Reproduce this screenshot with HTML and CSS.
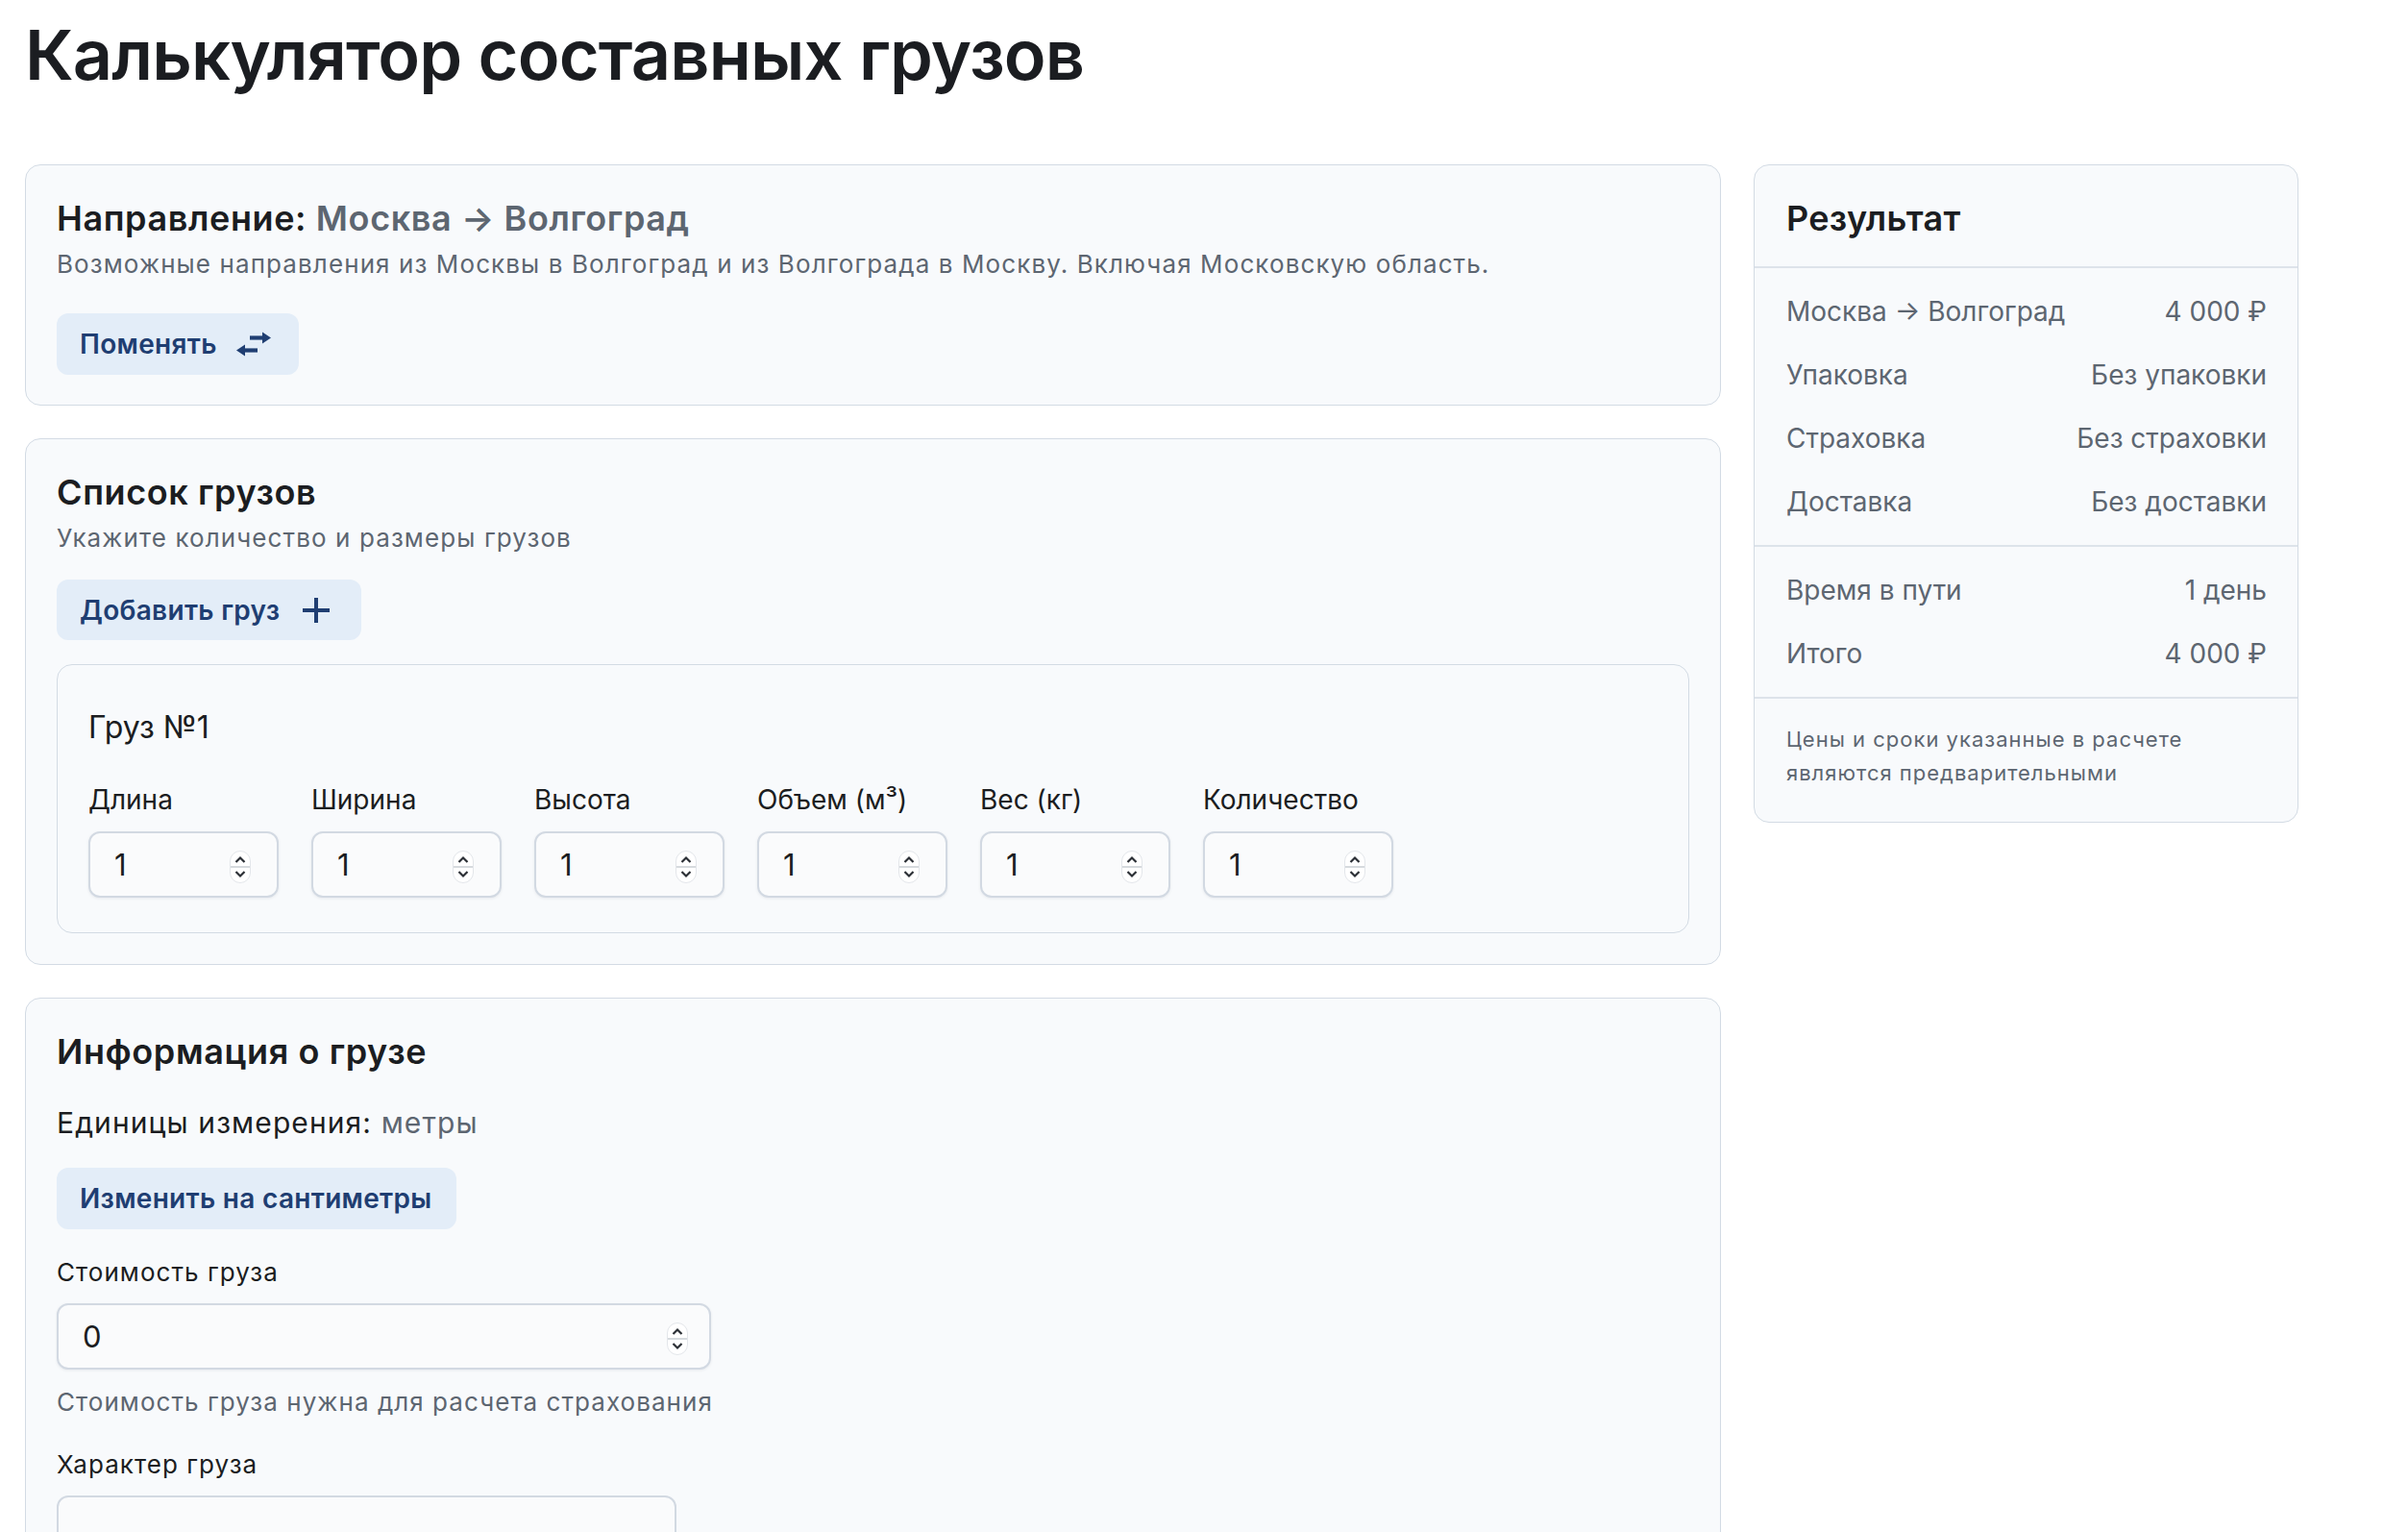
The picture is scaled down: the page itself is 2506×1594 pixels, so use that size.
FILE: index.html
```html
<!DOCTYPE html>
<html lang="ru">
<head>
    <meta charset="UTF-8">
    <meta name="viewport" content="width=device-width, initial-scale=1.0">
    <title>Калькулятор составных грузов</title>
    <link rel="stylesheet" href="styles.css">
</head>
<body>
    <div class="page">
        <h1 class="title">Калькулятор составных грузов</h1>
        <div class="layout">
            <main class="form-col">
                <!-- Направление -->
                <section class="card">
                    <h2 class="card-title">Направление: <span class="muted">Москва → Волгоград</span></h2>
                    <p class="card-text">Возможные направления из Москвы в Волгоград и из Волгограда в Москву. Включая Московскую область.</p>
                    <button class="btn btn-icon-after btn-swap" type="button">
                        Поменять
                        <svg class="btn-icon" width="36" height="26" viewBox="0 0 36 26">
                            <path d="M14 6.5h14" stroke="currentColor" stroke-width="4.2"/>
                            <path d="M27 0.5l9 6-9 6z" fill="currentColor"/>
                            <path d="M22 19.5h-14" stroke="currentColor" stroke-width="4.2"/>
                            <path d="M9 13.5l-9 6 9 6z" fill="currentColor"/>
                        </svg>
                    </button>
                </section>

                <!-- Список грузов -->
                <section class="card">
                    <h2 class="card-title">Список грузов</h2>
                    <p class="card-text">Укажите количество и размеры грузов</p>
                    <button class="btn btn-icon-after btn-add" type="button">
                        Добавить груз
                        <svg class="btn-icon" width="36" height="28" viewBox="0 0 36 28">
                            <path d="M18 1v26M4 14h28" stroke="currentColor" stroke-width="4"/>
                        </svg>
                    </button>

                    <div class="cargo">
                        <div class="cargo-title">Груз №1</div>
                        <div class="cargo-fields">
                            <label class="field">
                                <span class="field-label">Длина</span>
                                <span class="num"><input type="number" value="1"><svg class="spin" width="22" height="34" viewBox="0 0 22 34"><rect x="0.5" y="0.5" width="21" height="33" rx="10.5" fill="#fff" stroke="#e3e6ea"/><path d="M1 17h20" stroke="#d6dade" stroke-width="2"/><path d="M6.5 12l4.5-4.5 4.5 4.5M6.5 22l4.5 4.5 4.5-4.5" fill="none" stroke="#2b2f35" stroke-width="2.2"/></svg></span>
                            </label>
                            <label class="field">
                                <span class="field-label">Ширина</span>
                                <span class="num"><input type="number" value="1"><svg class="spin" width="22" height="34" viewBox="0 0 22 34"><rect x="0.5" y="0.5" width="21" height="33" rx="10.5" fill="#fff" stroke="#e3e6ea"/><path d="M1 17h20" stroke="#d6dade" stroke-width="2"/><path d="M6.5 12l4.5-4.5 4.5 4.5M6.5 22l4.5 4.5 4.5-4.5" fill="none" stroke="#2b2f35" stroke-width="2.2"/></svg></span>
                            </label>
                            <label class="field">
                                <span class="field-label">Высота</span>
                                <span class="num"><input type="number" value="1"><svg class="spin" width="22" height="34" viewBox="0 0 22 34"><rect x="0.5" y="0.5" width="21" height="33" rx="10.5" fill="#fff" stroke="#e3e6ea"/><path d="M1 17h20" stroke="#d6dade" stroke-width="2"/><path d="M6.5 12l4.5-4.5 4.5 4.5M6.5 22l4.5 4.5 4.5-4.5" fill="none" stroke="#2b2f35" stroke-width="2.2"/></svg></span>
                            </label>
                            <label class="field">
                                <span class="field-label">Объем (м³)</span>
                                <span class="num"><input type="number" value="1"><svg class="spin" width="22" height="34" viewBox="0 0 22 34"><rect x="0.5" y="0.5" width="21" height="33" rx="10.5" fill="#fff" stroke="#e3e6ea"/><path d="M1 17h20" stroke="#d6dade" stroke-width="2"/><path d="M6.5 12l4.5-4.5 4.5 4.5M6.5 22l4.5 4.5 4.5-4.5" fill="none" stroke="#2b2f35" stroke-width="2.2"/></svg></span>
                            </label>
                            <label class="field">
                                <span class="field-label">Вес (кг)</span>
                                <span class="num"><input type="number" value="1"><svg class="spin" width="22" height="34" viewBox="0 0 22 34"><rect x="0.5" y="0.5" width="21" height="33" rx="10.5" fill="#fff" stroke="#e3e6ea"/><path d="M1 17h20" stroke="#d6dade" stroke-width="2"/><path d="M6.5 12l4.5-4.5 4.5 4.5M6.5 22l4.5 4.5 4.5-4.5" fill="none" stroke="#2b2f35" stroke-width="2.2"/></svg></span>
                            </label>
                            <label class="field">
                                <span class="field-label">Количество</span>
                                <span class="num"><input type="number" value="1"><svg class="spin" width="22" height="34" viewBox="0 0 22 34"><rect x="0.5" y="0.5" width="21" height="33" rx="10.5" fill="#fff" stroke="#e3e6ea"/><path d="M1 17h20" stroke="#d6dade" stroke-width="2"/><path d="M6.5 12l4.5-4.5 4.5 4.5M6.5 22l4.5 4.5 4.5-4.5" fill="none" stroke="#2b2f35" stroke-width="2.2"/></svg></span>
                            </label>
                        </div>
                    </div>
                </section>

                <!-- Информация о грузе -->
                <section class="card card-info">
                    <h2 class="card-title">Информация о грузе</h2>
                    <div class="units">Единицы измерения: <span class="muted">метры</span></div>
                    <button class="btn btn-units" type="button">Изменить на сантиметры</button>

                    <label class="info-label">Стоимость груза</label>
                    <span class="num num-wide"><input type="number" value="0"><svg class="spin" width="22" height="34" viewBox="0 0 22 34"><rect x="0.5" y="0.5" width="21" height="33" rx="10.5" fill="#fff" stroke="#e3e6ea"/><path d="M1 17h20" stroke="#d6dade" stroke-width="2"/><path d="M6.5 12l4.5-4.5 4.5 4.5M6.5 22l4.5 4.5 4.5-4.5" fill="none" stroke="#2b2f35" stroke-width="2.2"/></svg></span>
                    <p class="hint">Стоимость груза нужна для расчета страхования</p>

                    <label class="info-label info-label-gap">Характер груза</label>
                    <div class="select-box"></div>
                </section>
            </main>

            <aside class="result">
                <div class="result-head">Результат</div>
                <div class="result-group">
                    <div class="result-row"><span>Москва → Волгоград</span><span>4 000 ₽</span></div>
                    <div class="result-row"><span>Упаковка</span><span>Без упаковки</span></div>
                    <div class="result-row"><span>Страховка</span><span>Без страховки</span></div>
                    <div class="result-row"><span>Доставка</span><span>Без доставки</span></div>
                </div>
                <div class="result-group">
                    <div class="result-row"><span>Время в пути</span><span>1 день</span></div>
                    <div class="result-row"><span>Итого</span><span>4 000 ₽</span></div>
                </div>
                <p class="result-note">Цены и сроки указанные в расчете являются предварительными</p>
            </aside>
        </div>
    </div>
</body>
</html>
```

FILE: styles.css
```css
/* Калькулятор */
body {
    margin: 0;
    font-family: Inter, "Noto Sans", sans-serif;
    color: #1b1d21;
    background: #fff;
}

.page {
    padding: 0 0 0 26px;
}

.title {
    margin: 0;
    padding-top: 14px;
    font-size: 72px;
    line-height: 86px;
    font-weight: 600;
    letter-spacing: -0.85px;
}

.layout {
    display: grid;
    grid-template-columns: 1765px 567px;
    gap: 34px;
    margin-top: 71px;
    align-items: start;
}

.form-col {
    display: flex;
    flex-direction: column;
    gap: 34px;
}

.card {
    background: #f8fafc;
    border: 1px solid #d3dbe4;
    border-radius: 16px;
    padding: 32px 32px 31px;
}

.card-title {
    margin: 0;
    font-size: 36px;
    line-height: 47px;
    font-weight: 600;
    letter-spacing: 0.6px;
}

.muted {
    color: #5d6671;
}

.card-text {
    margin: 4px 0 0;
    font-size: 26px;
    line-height: 39px;
    letter-spacing: 1.1px;
    color: #5d6671;
}

.btn {
    display: inline-flex;
    align-items: center;
    border: none;
    border-radius: 12px;
    background: #e3edf8;
    color: #1f3e72;
    font-family: inherit;
    font-size: 28px;
    font-weight: 600;
    letter-spacing: 0.3px;
    height: 64px;
    padding: 0 25px 0 24px;
    cursor: pointer;
}

.btn-icon-after {
    gap: 20px;
    padding-right: 29px;
}

.btn-swap {
    margin-top: 32px;
}

.btn-add {
    margin-top: 24px;
    height: 63px;
}

.btn-icon {
    display: block;
}

.cargo {
    margin-top: 25px;
    margin-bottom: 1px;
    border: 1px solid #d3dbe4;
    border-radius: 16px;
    padding: 41px 32px 36px;
}

.cargo-title {
    font-size: 32px;
    line-height: 48px;
}

.cargo-fields {
    display: flex;
    gap: 34px;
    margin-top: 30px;
}

.field {
    display: flex;
    flex-direction: column;
    gap: 12px;
    width: 198px;
}

.field-label {
    font-size: 28px;
    line-height: 42px;
}

.num {
    display: flex;
    align-items: center;
    height: 69px;
    box-sizing: border-box;
    border: 2px solid #d2d9e2;
    border-radius: 12px;
    background: #fafbfc;
    box-shadow: 0 1px 3px rgba(30, 40, 60, 0.08);
    padding: 0 27px 0 25px;
}

.num input {
    flex: 1;
    min-width: 0;
    border: none;
    outline: none;
    background: transparent;
    font-family: inherit;
    font-size: 31px;
    color: #1b1d21;
    padding: 0;
    -moz-appearance: textfield;
}

.num input::-webkit-inner-spin-button,
.num input::-webkit-outer-spin-button {
    -webkit-appearance: none;
    margin: 0;
}

.spin {
    flex: none;
    margin-top: 4px;
}

.card-info {
    padding-bottom: 200px;
}

.units {
    margin-top: 29px;
    font-size: 30px;
    line-height: 42px;
    letter-spacing: 1.1px;
}

.btn-units {
    margin-top: 26px;
}

.info-label {
    display: block;
    margin-top: 25px;
    font-size: 26px;
    line-height: 39px;
    letter-spacing: 1.05px;
}

.info-label-gap {
    margin-top: 26px;
}

.num-wide {
    width: 681px;
    margin-top: 13px;
    padding-right: 22px;
}

.hint {
    margin: 14px 0 0;
    font-size: 26px;
    line-height: 39px;
    letter-spacing: 1.05px;
    color: #5d6671;
}

.select-box {
    width: 645px;
    height: 69px;
    margin-top: 13px;
    box-sizing: border-box;
    border: 2px solid #d2d9e2;
    border-radius: 12px;
    background: #fafbfc;
}

.result {
    background: #f8fafc;
    border: 1px solid #d3dbe4;
    border-radius: 16px;
}

.result-head {
    padding: 32px 33px 26px;
    font-size: 36px;
    line-height: 47px;
    font-weight: 600;
    letter-spacing: 0.3px;
    border-bottom: 2px solid #dde3ea;
}

.result-group {
    padding: 12px 0;
    border-bottom: 2px solid #dde3ea;
}

.result-row {
    display: flex;
    justify-content: space-between;
    align-items: center;
    height: 66px;
    padding: 0 32px 0 33px;
    font-size: 28px;
    color: #5d6671;
}

.result-note {
    margin: 0;
    padding: 25px 33px 33px;
    font-size: 22px;
    line-height: 35px;
    letter-spacing: 1px;
    color: #5d6671;
}
```
